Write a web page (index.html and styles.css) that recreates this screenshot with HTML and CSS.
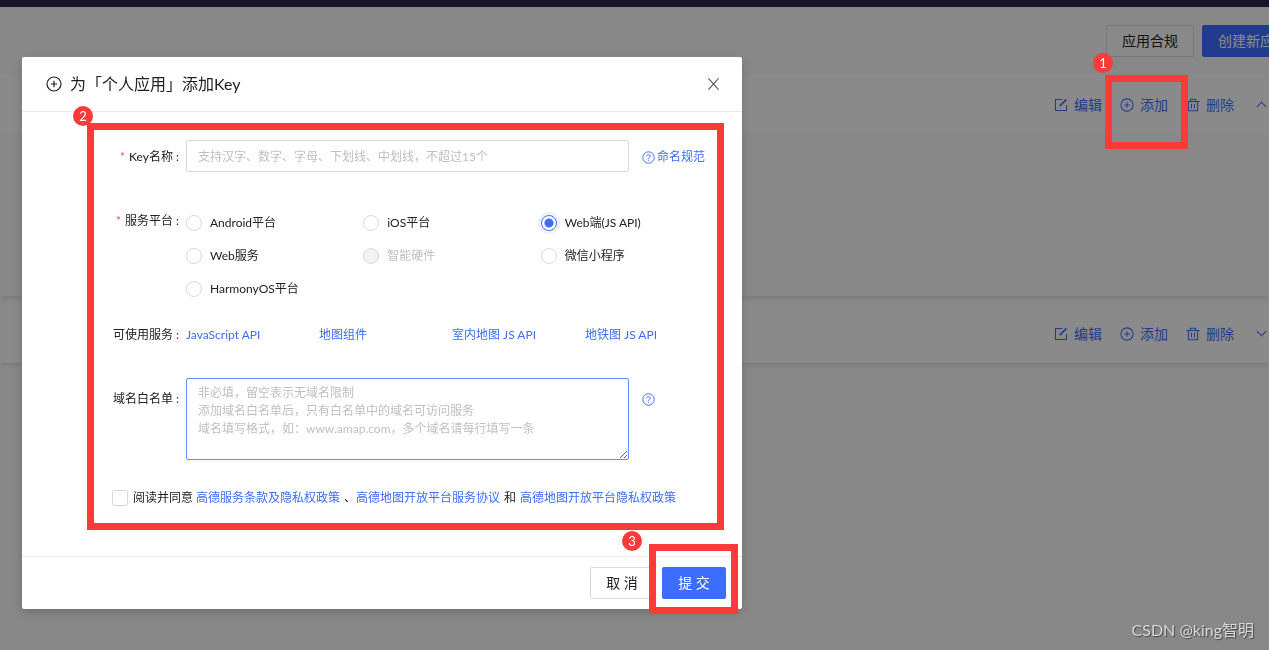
FILE: index.html
```html
<!DOCTYPE html>
<html lang="zh-CN">
<head>
<meta charset="utf-8">
<title>应用管理</title>
<link rel="stylesheet" href="styles.css">
</head>
<body>
<svg class="sprite" aria-hidden="true">
  <symbol id="i-plus" viewBox="0 0 16 16"><circle cx="8" cy="8" r="7"/><path d="M8 4.8v6.4M4.8 8h6.4"/></symbol>
  <symbol id="i-help" viewBox="0 0 16 16"><circle cx="8" cy="8" r="7"/><path d="M5.9 6.4c0-1.200.9-2 2.100-2s2.100.8 2.100 1.900c0 1.500-2.100 1.500-2.100 3.200M8 10.800v1.200"/></symbol>
  <symbol id="i-edit" viewBox="0 0 16 16"><path d="M9.500 1.700H1.700v12.600h12.600V8"/><path d="M6.600 9.400L14.300 1.700" stroke-width="2"/></symbol>
  <symbol id="i-trash" viewBox="0 0 16 16"><path d="M0.500 4h15M5 4V1.500h6V4M2.700 4v10.500h10.600V4M6.300 6.500v5.500M9.700 6.500v5.500"/></symbol>
  <symbol id="i-up" viewBox="0 0 12 12"><path d="M1 8.500l5-5 5 5"/></symbol>
  <symbol id="i-down" viewBox="0 0 12 12"><path d="M1 3.500l5 5 5-5"/></symbol>
  <symbol id="i-close" viewBox="0 0 14 14"><path d="M1.500 1l11 12M12.500 1l-11 12"/></symbol>
</svg>

<div class="page">
  <div class="topbar"></div>
  <div class="toolbar">
    <button class="btn" type="button">应用合规</button>
    <button class="btn btn-primary" type="button">创建新应用</button>
  </div>
  <section class="card card-open">
    <div class="card-head">
      <a class="action" href="#"><svg class="icon"><use href="#i-edit"/></svg>编辑</a>
      <a class="action" href="#"><svg class="icon"><use href="#i-plus"/></svg>添加</a>
      <a class="action" href="#"><svg class="icon"><use href="#i-trash"/></svg>删除</a>
      <button class="toggle" type="button" aria-label="收起"><svg><use href="#i-up"/></svg></button>
    </div>
    <div class="card-body"></div>
  </section>
  <section class="card">
    <div class="card-head">
      <a class="action" href="#"><svg class="icon"><use href="#i-edit"/></svg>编辑</a>
      <a class="action" href="#"><svg class="icon"><use href="#i-plus"/></svg>添加</a>
      <a class="action" href="#"><svg class="icon"><use href="#i-trash"/></svg>删除</a>
      <button class="toggle" type="button" aria-label="展开"><svg><use href="#i-down"/></svg></button>
    </div>
  </section>
</div>

<div class="mask">
  <div class="modal" role="dialog" aria-labelledby="modal-title">
    <header class="modal-head">
      <svg class="title-icon"><use href="#i-plus"/></svg>
      <h1 class="modal-title" id="modal-title">为「个人应用」添加Key</h1>
      <button class="close" type="button" aria-label="关闭"><svg><use href="#i-close"/></svg></button>
    </header>
    <form class="modal-body">
      <div class="row">
        <label class="label required" for="key-name">Key名称</label>
        <div class="control">
          <input class="text" id="key-name" type="text" placeholder="支持汉字、数字、字母、下划线、中划线，不超过15个">
          <a class="aside" href="#"><svg class="help"><use href="#i-help"/></svg>命名规范</a>
        </div>
      </div>
      <div class="row row-platform" role="radiogroup" aria-labelledby="platform-label">
        <span class="label required" id="platform-label">服务平台</span>
        <div class="radios">
          <label class="radio"><input type="radio" name="platform">Android平台</label>
          <label class="radio"><input type="radio" name="platform">iOS平台</label>
          <label class="radio"><input type="radio" name="platform" checked>Web端(JS API)</label>
          <label class="radio"><input type="radio" name="platform">Web服务</label>
          <label class="radio disabled"><input type="radio" name="platform" disabled>智能硬件</label>
          <label class="radio"><input type="radio" name="platform">微信小程序</label>
          <label class="radio"><input type="radio" name="platform">HarmonyOS平台</label>
        </div>
      </div>
      <div class="row row-services">
        <span class="label">可使用服务</span>
        <div class="services">
          <a href="#">JavaScript API</a>
          <a href="#">地图组件</a>
          <a href="#">室内地图 JS API</a>
          <a href="#">地铁图 JS API</a>
        </div>
      </div>
      <div class="row row-domains">
        <label class="label" for="domains">域名白名单</label>
        <div class="control">
          <textarea class="text area" id="domains" placeholder="非必填，留空表示无域名限制&#10;添加域名白名单后，只有白名单中的域名可访问服务&#10;域名填写格式，如：www.amap.com，多个域名请每行填写一条"></textarea>
          <a class="aside" href="#" aria-label="帮助"><svg class="help"><use href="#i-help"/></svg></a>
        </div>
      </div>
      <div class="agree">
        <input type="checkbox" id="agree"><label for="agree">阅读并同意</label>
        <a href="#">高德服务条款及隐私权政策</a><span>、</span><a href="#">高德地图开放平台服务协议</a><span>和</span><a href="#">高德地图开放平台隐私权政策</a>
      </div>
    </form>
    <footer class="modal-foot">
      <button class="btn" type="button">取 消</button>
      <button class="btn btn-primary" type="button">提 交</button>
    </footer>
    <div class="frame frame-form"></div>
    <div class="frame frame-submit"></div>
    <span class="badge badge-form">2</span>
    <span class="badge badge-submit">3</span>
  </div>
</div>
<div class="frame frame-add"></div>
<span class="badge badge-add">1</span>
<div class="watermark">CSDN @king智明</div>
</body>
</html>
```
FILE: styles.css
```css
* { box-sizing: border-box; }

body {
  margin: 0;
  min-height: 100vh;
  position: relative;
  overflow: hidden;
  background: #f7f7f7;
  color: #222;
  font: 12px/18px Lato, "Noto Sans CJK SC", sans-serif;
}

a { color: #3d6dff; text-decoration: none; }
button, input, textarea { font: inherit; color: inherit; }
svg { fill: none; stroke: currentColor; stroke-width: 1.2; flex: none; }
.sprite { display: none; }

.btn {
  min-width: 64px;
  height: 32px;
  padding: 0 15px;
  border: 1px solid #d9d9d9;
  border-radius: 2px;
  background: #fff;
  font-size: 14px;
  white-space: nowrap;
}
.btn-primary { border-color: #3d6dff; background: #3d6dff; color: #fff; }

/* page behind the dialog */
.topbar { height: 7px; background: #272b4c; }
.toolbar {
  display: flex;
  justify-content: flex-end;
  gap: 8px;
  height: 68px;
  padding-top: 18px;
  margin-right: -35px;
}
.toolbar .btn:first-child { background: #fafafa; }
.card {
  margin-bottom: 8px;
  background: #fafafa;
  box-shadow: 0 3px 4px -1px rgba(0, 0, 0, .1);
}
.card-head {
  display: flex;
  align-items: center;
  justify-content: flex-end;
  gap: 18px;
  height: 59px;
  padding-right: 2px;
  background: #fcfcfc;
  font-size: 14px;
}
.card-body { height: 162px; background: #f8f8f8; }
.action { display: flex; align-items: center; gap: 6px; }
.icon { width: 14px; height: 14px; }
.toggle {
  display: flex;
  margin-left: 4px;
  padding: 0;
  border: 0;
  background: none;
  color: #3d6dff;
}
.toggle svg { width: 11px; height: 11px; }

/* dialog */
.mask {
  position: fixed;
  inset: 0;
  padding: 57px 22px;
  background: rgba(0, 0, 0, .45);
}
.modal {
  position: relative;
  max-width: 720px;
  border-radius: 2px;
  background: #fff;
  box-shadow: 0 4px 12px rgba(0, 0, 0, .18);
}
.modal-head {
  display: flex;
  align-items: center;
  height: 55px;
  padding: 0 22px 0 24px;
  border-bottom: 1px solid #e8e8e8;
}
.title-icon { width: 16px; height: 16px; }
.modal-title { flex: 1; margin: 0 0 0 8px; font-size: 16px; font-weight: 400; line-height: 24px; }
.close { display: flex; padding: 0; border: 0; background: none; color: #555; }
.close svg { width: 13px; height: 14px; }

.modal-body { padding: 28px 24px 49px 90px; }
.row { display: grid; grid-template-columns: 74px 1fr; }
.label { line-height: 34px; text-align: right; white-space: nowrap; }
.label::after { content: ":"; margin: 0 7px 0 3px; }
.required::before { content: "*"; margin-right: 4px; color: #ff4d2e; }
.control { display: flex; align-items: flex-start; gap: 13px; }
.text {
  flex: 1;
  min-width: 0;
  height: 32px;
  padding: 0 11px;
  border: 1px solid #d9d9d9;
  border-radius: 2px;
  outline: 0;
  background: #fff;
}
.text::placeholder { color: #bfbfbf; }
.aside { display: flex; align-items: center; gap: 2px; width: 76px; height: 34px; }
.help { width: 13px; height: 13px; }

.row-platform { margin-top: 32px; }
.row-platform .label { line-height: 30px; }
.radios { display: grid; grid-template-columns: repeat(3, 1fr); }
.radio { display: flex; align-items: center; gap: 8px; height: 33px; }
.radio input {
  appearance: none;
  width: 16px;
  height: 16px;
  margin: 0;
  border: 1px solid #d9d9d9;
  border-radius: 50%;
  background: #fff;
}
.radio input:checked {
  border-color: #3d6dff;
  background: radial-gradient(circle, #3d6dff 4px, #fff 5px);
  box-shadow: 0 0 0 3px #edf2ff;
}
.radio input:disabled { background: #f3f3f3; }
.disabled { color: #bfbfbf; }

.row-services { margin-top: 21px; }
.row-services .label { line-height: 18px; }
.services { display: grid; grid-template-columns: repeat(4, 1fr); white-space: nowrap; }

.row-domains { margin-top: 34px; }
.row-domains .label { line-height: 42px; }
.row-domains .aside { height: 42px; }
.area { height: 82px; padding: 5px 11px; border-color: #5f8fff; resize: vertical; }

.agree { display: flex; align-items: center; margin-top: 29px; white-space: nowrap; }
.agree input {
  appearance: none;
  width: 16px;
  height: 16px;
  margin: 0 5px 0 0;
  border: 1px solid #d9d9d9;
  border-radius: 2px;
  background: #fff;
}
.agree label { margin-right: 3px; }
.agree span { margin: 0 4px; }
.agree span:first-of-type { margin-right: 0; }

.modal-foot {
  display: flex;
  justify-content: flex-end;
  gap: 8px;
  padding: 10px 16px;
  border-top: 1px solid #e8e8e8;
}

/* numbered annotations laid over the interface */
.frame { position: absolute; border: 7px solid #fc3a3a; pointer-events: none; }
.frame-form { inset: 66px 18px 79px 65px; }
.frame-submit { right: 4px; bottom: -5px; width: 89px; height: 70px; }
.frame-add { top: 75px; right: 81px; width: 83px; height: 74px; }
.badge {
  position: absolute;
  width: 20px;
  height: 20px;
  border-radius: 50%;
  background: #fc3a3a;
  color: #fff;
  font-size: 13px;
  line-height: 20px;
  text-align: center;
}
.badge-form { top: 49px; left: 51px; }
.badge-submit { right: 100px; bottom: 58px; }
.badge-add { top: 53px; right: 156px; }

.watermark {
  position: absolute;
  right: 15px;
  bottom: 8px;
  color: #d8d8d8;
  font-size: 16px;
  line-height: 24px;
  text-shadow: 1px 1px 1px #444;
}
```
